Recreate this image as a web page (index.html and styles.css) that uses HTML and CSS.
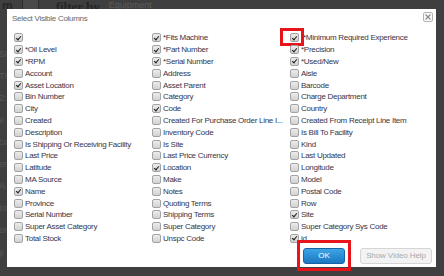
FILE: index.html
```html
<!DOCTYPE html>
<html>
<head>
<meta charset="utf-8">
<link rel="stylesheet" href="styles.css">
</head>
<body>
<div class="page">
  <div class="topbar">
    <span class="tb-m">m</span>
    <span class="tb-btn"></span>
    <span class="tb-filter">filter by</span>
    <span class="tb-eq">Equipment</span>
  </div>
  <div class="sidefrag">
    <span>St</span>
    <span>TC</span>
    <span>2:</span>
    <span>e</span>
    <span>ca</span>
    <span>er</span>
    <span>A</span>
    <span>to</span>
    <span>er</span>
    <span>y</span>
  </div>

  <div class="modal">
    <div class="head">
      <div class="title">Select Visible Columns</div>
      <div class="close"><svg width="6" height="6" viewBox="0 0 6 6"><path d="M0.5 0.5L5.5 5.5M5.5 0.5L0.5 5.5" stroke="#8a8a8a" stroke-width="1.1"/></svg></div>
    </div>
    <div class="grid">
      <div class="item"><span class="cb on"></span><span class="lbl"></span></div>
      <div class="item"><span class="cb on"></span><span class="lbl">*Fits Machine</span></div>
      <div class="item"><span class="cb on"><span class="hl-cb"></span></span><span class="lbl shift">*Minimum Required Experience</span></div>

      <div class="item"><span class="cb on"></span><span class="lbl">*Oil Level</span></div>
      <div class="item"><span class="cb on"></span><span class="lbl">*Part Number</span></div>
      <div class="item"><span class="cb on"></span><span class="lbl">*Precision</span></div>

      <div class="item"><span class="cb on"></span><span class="lbl">*RPM</span></div>
      <div class="item"><span class="cb on"></span><span class="lbl">*Serial Number</span></div>
      <div class="item"><span class="cb on"></span><span class="lbl">*Used/New</span></div>

      <div class="item"><span class="cb"></span><span class="lbl">Account</span></div>
      <div class="item"><span class="cb"></span><span class="lbl">Address</span></div>
      <div class="item"><span class="cb"></span><span class="lbl">Aisle</span></div>

      <div class="item"><span class="cb on"></span><span class="lbl">Asset Location</span></div>
      <div class="item"><span class="cb"></span><span class="lbl">Asset Parent</span></div>
      <div class="item"><span class="cb"></span><span class="lbl">Barcode</span></div>

      <div class="item"><span class="cb"></span><span class="lbl">Bin Number</span></div>
      <div class="item"><span class="cb"></span><span class="lbl">Category</span></div>
      <div class="item"><span class="cb"></span><span class="lbl">Charge Department</span></div>

      <div class="item"><span class="cb"></span><span class="lbl">City</span></div>
      <div class="item"><span class="cb on"></span><span class="lbl">Code</span></div>
      <div class="item"><span class="cb"></span><span class="lbl">Country</span></div>

      <div class="item"><span class="cb"></span><span class="lbl">Created</span></div>
      <div class="item"><span class="cb"></span><span class="lbl">Created For Purchase Order Line I...</span></div>
      <div class="item"><span class="cb"></span><span class="lbl">Created From Receipt Line Item</span></div>

      <div class="item"><span class="cb"></span><span class="lbl">Description</span></div>
      <div class="item"><span class="cb"></span><span class="lbl">Inventory Code</span></div>
      <div class="item"><span class="cb"></span><span class="lbl">Is Bill To Facility</span></div>

      <div class="item"><span class="cb"></span><span class="lbl">Is Shipping Or Receiving Facility</span></div>
      <div class="item"><span class="cb"></span><span class="lbl">Is Site</span></div>
      <div class="item"><span class="cb"></span><span class="lbl">Kind</span></div>

      <div class="item"><span class="cb"></span><span class="lbl">Last Price</span></div>
      <div class="item"><span class="cb"></span><span class="lbl">Last Price Currency</span></div>
      <div class="item"><span class="cb"></span><span class="lbl">Last Updated</span></div>

      <div class="item"><span class="cb"></span><span class="lbl">Latitude</span></div>
      <div class="item"><span class="cb on"></span><span class="lbl">Location</span></div>
      <div class="item"><span class="cb"></span><span class="lbl">Longitude</span></div>

      <div class="item"><span class="cb"></span><span class="lbl">MA Source</span></div>
      <div class="item"><span class="cb"></span><span class="lbl">Make</span></div>
      <div class="item"><span class="cb"></span><span class="lbl">Model</span></div>

      <div class="item"><span class="cb on"></span><span class="lbl">Name</span></div>
      <div class="item"><span class="cb"></span><span class="lbl">Notes</span></div>
      <div class="item"><span class="cb"></span><span class="lbl">Postal Code</span></div>

      <div class="item"><span class="cb"></span><span class="lbl">Province</span></div>
      <div class="item"><span class="cb"></span><span class="lbl">Quoting Terms</span></div>
      <div class="item"><span class="cb"></span><span class="lbl">Row</span></div>

      <div class="item"><span class="cb"></span><span class="lbl">Serial Number</span></div>
      <div class="item"><span class="cb"></span><span class="lbl">Shipping Terms</span></div>
      <div class="item"><span class="cb on"></span><span class="lbl">Site</span></div>

      <div class="item"><span class="cb"></span><span class="lbl">Super Asset Category</span></div>
      <div class="item"><span class="cb"></span><span class="lbl">Super Category</span></div>
      <div class="item"><span class="cb"></span><span class="lbl">Super Category Sys Code</span></div>

      <div class="item"><span class="cb"></span><span class="lbl">Total Stock</span></div>
      <div class="item"><span class="cb"></span><span class="lbl">Unspc Code</span></div>
      <div class="item"><span class="cb on"></span><span class="lbl">id</span></div>
    </div>
    <div class="foot">
      <button class="btn ok">OK<span class="hl-ok"></span></button>
      <button class="btn help">Show Video Help</button>
    </div>
  </div>
</div>
</body>
</html>
```

FILE: styles.css
```css
html, body {
  margin: 0;
  padding: 0;
}
body {
  width: 444px;
  height: 276px;
  overflow: hidden;
  background: #3e3e3e;
  font-family: "Liberation Sans", Arial, sans-serif;
}
.page {
  position: relative;
  width: 444px;
  height: 276px;
  background: #3f3f3f;
  overflow: hidden;
}
.topbar {
  display: flex;
  align-items: flex-end;
  height: 9px;
  overflow: hidden;
  gap: 0;
  font-size: 12px;
  line-height: 12px;
}
.tb-m {
  color: #262626;
  font-weight: bold;
  margin-left: 2px;
  margin-bottom: -3px;
}
.tb-btn {
  width: 15px;
  height: 12px;
  margin-left: 9px;
  margin-bottom: -3px;
  background: #4a4a4a;
  border: 1px solid #2e2e2e;
  border-radius: 2px;
}
.tb-filter {
  color: #262626;
  font-weight: bold;
  font-family: "Liberation Serif", serif;
  font-size: 13px;
  margin-left: 17px;
  margin-bottom: -4px;
}
.tb-eq {
  color: #5c5c5c;
  font-size: 9px;
  margin-left: 9px;
  margin-bottom: -2px;
}
.sidefrag {
  display: flex;
  flex-direction: column;
  gap: 12px;
  padding-top: 40px;
  margin-left: -1px;
  font-size: 9px;
  line-height: 10px;
  color: #585858;
}
.modal {
  position: absolute;
  left: 7px;
  top: 9px;
  width: 429px;
  height: 258px;
  box-sizing: border-box;
  background: #ffffff;
  padding: 3px 3px 0 5px;
  display: flex;
  flex-direction: column;
}
.head {
  display: flex;
  justify-content: space-between;
  align-items: flex-start;
  height: 20px;
}
.title {
  margin-top: 1px;
  font-size: 8px;
  line-height: 12px;
  letter-spacing: -0.28px;
  color: #676767;
}
.close {
  width: 10px;
  height: 10px;
  box-sizing: border-box;
  border: 1px solid #b4b4b4;
  border-radius: 2px;
  background: #fafafa;
  display: flex;
  align-items: center;
  justify-content: center;
}
.close svg {
  display: block;
}
.grid {
  display: grid;
  grid-template-columns: 138px 138px 1fr;
  grid-auto-rows: 11.8px;
  padding-left: 2px;
}
.item {
  display: flex;
  align-items: center;
  gap: 2px;
  white-space: nowrap;
  min-width: 0;
}
.cb {
  position: relative;
  flex: none;
  width: 9px;
  height: 9px;
  box-sizing: border-box;
  border: 1px solid #a3a3a3;
  border-radius: 2px;
  background: linear-gradient(#ececec, #d2d2d2);
}
.cb.on::after {
  content: "";
  position: absolute;
  left: 1.5px;
  top: 0.5px;
  width: 2px;
  height: 4px;
  border-right: 1.5px solid #1e1e1e;
  border-bottom: 1.5px solid #1e1e1e;
  transform: rotate(40deg);
}
.lbl {
  font-size: 8px;
  line-height: 11px;
  letter-spacing: -0.28px;
  color: #35354a;
}
.lbl.shift {
  margin-left: 2px;
}
.hl-cb {
  position: absolute;
  left: -11px;
  top: -6px;
  width: 24px;
  height: 18px;
  box-sizing: border-box;
  border: 3px solid #e8141b;
}
.foot {
  display: flex;
  justify-content: flex-end;
  gap: 15px;
  padding-right: 1px;
  margin-top: 4px;
}
.btn {
  position: relative;
  height: 16px;
  box-sizing: border-box;
  border-radius: 3px;
  font-family: "Liberation Sans", Arial, sans-serif;
  font-size: 8px;
  line-height: 14px;
  padding: 0;
  letter-spacing: -0.1px;
}
.ok {
  width: 42px;
  color: #ffffff;
  border: 1px solid #1763a3;
  background: linear-gradient(#3ea5e6, #1a78c2);
}
.help {
  width: 72px;
  color: #a9a9a9;
  border: 1px solid #d5d5d5;
  background: #f3f3f3;
}
.hl-ok {
  position: absolute;
  left: -7px;
  top: -9px;
  width: 54px;
  height: 31px;
  box-sizing: border-box;
  border: 3px solid #e8141b;
}
```
